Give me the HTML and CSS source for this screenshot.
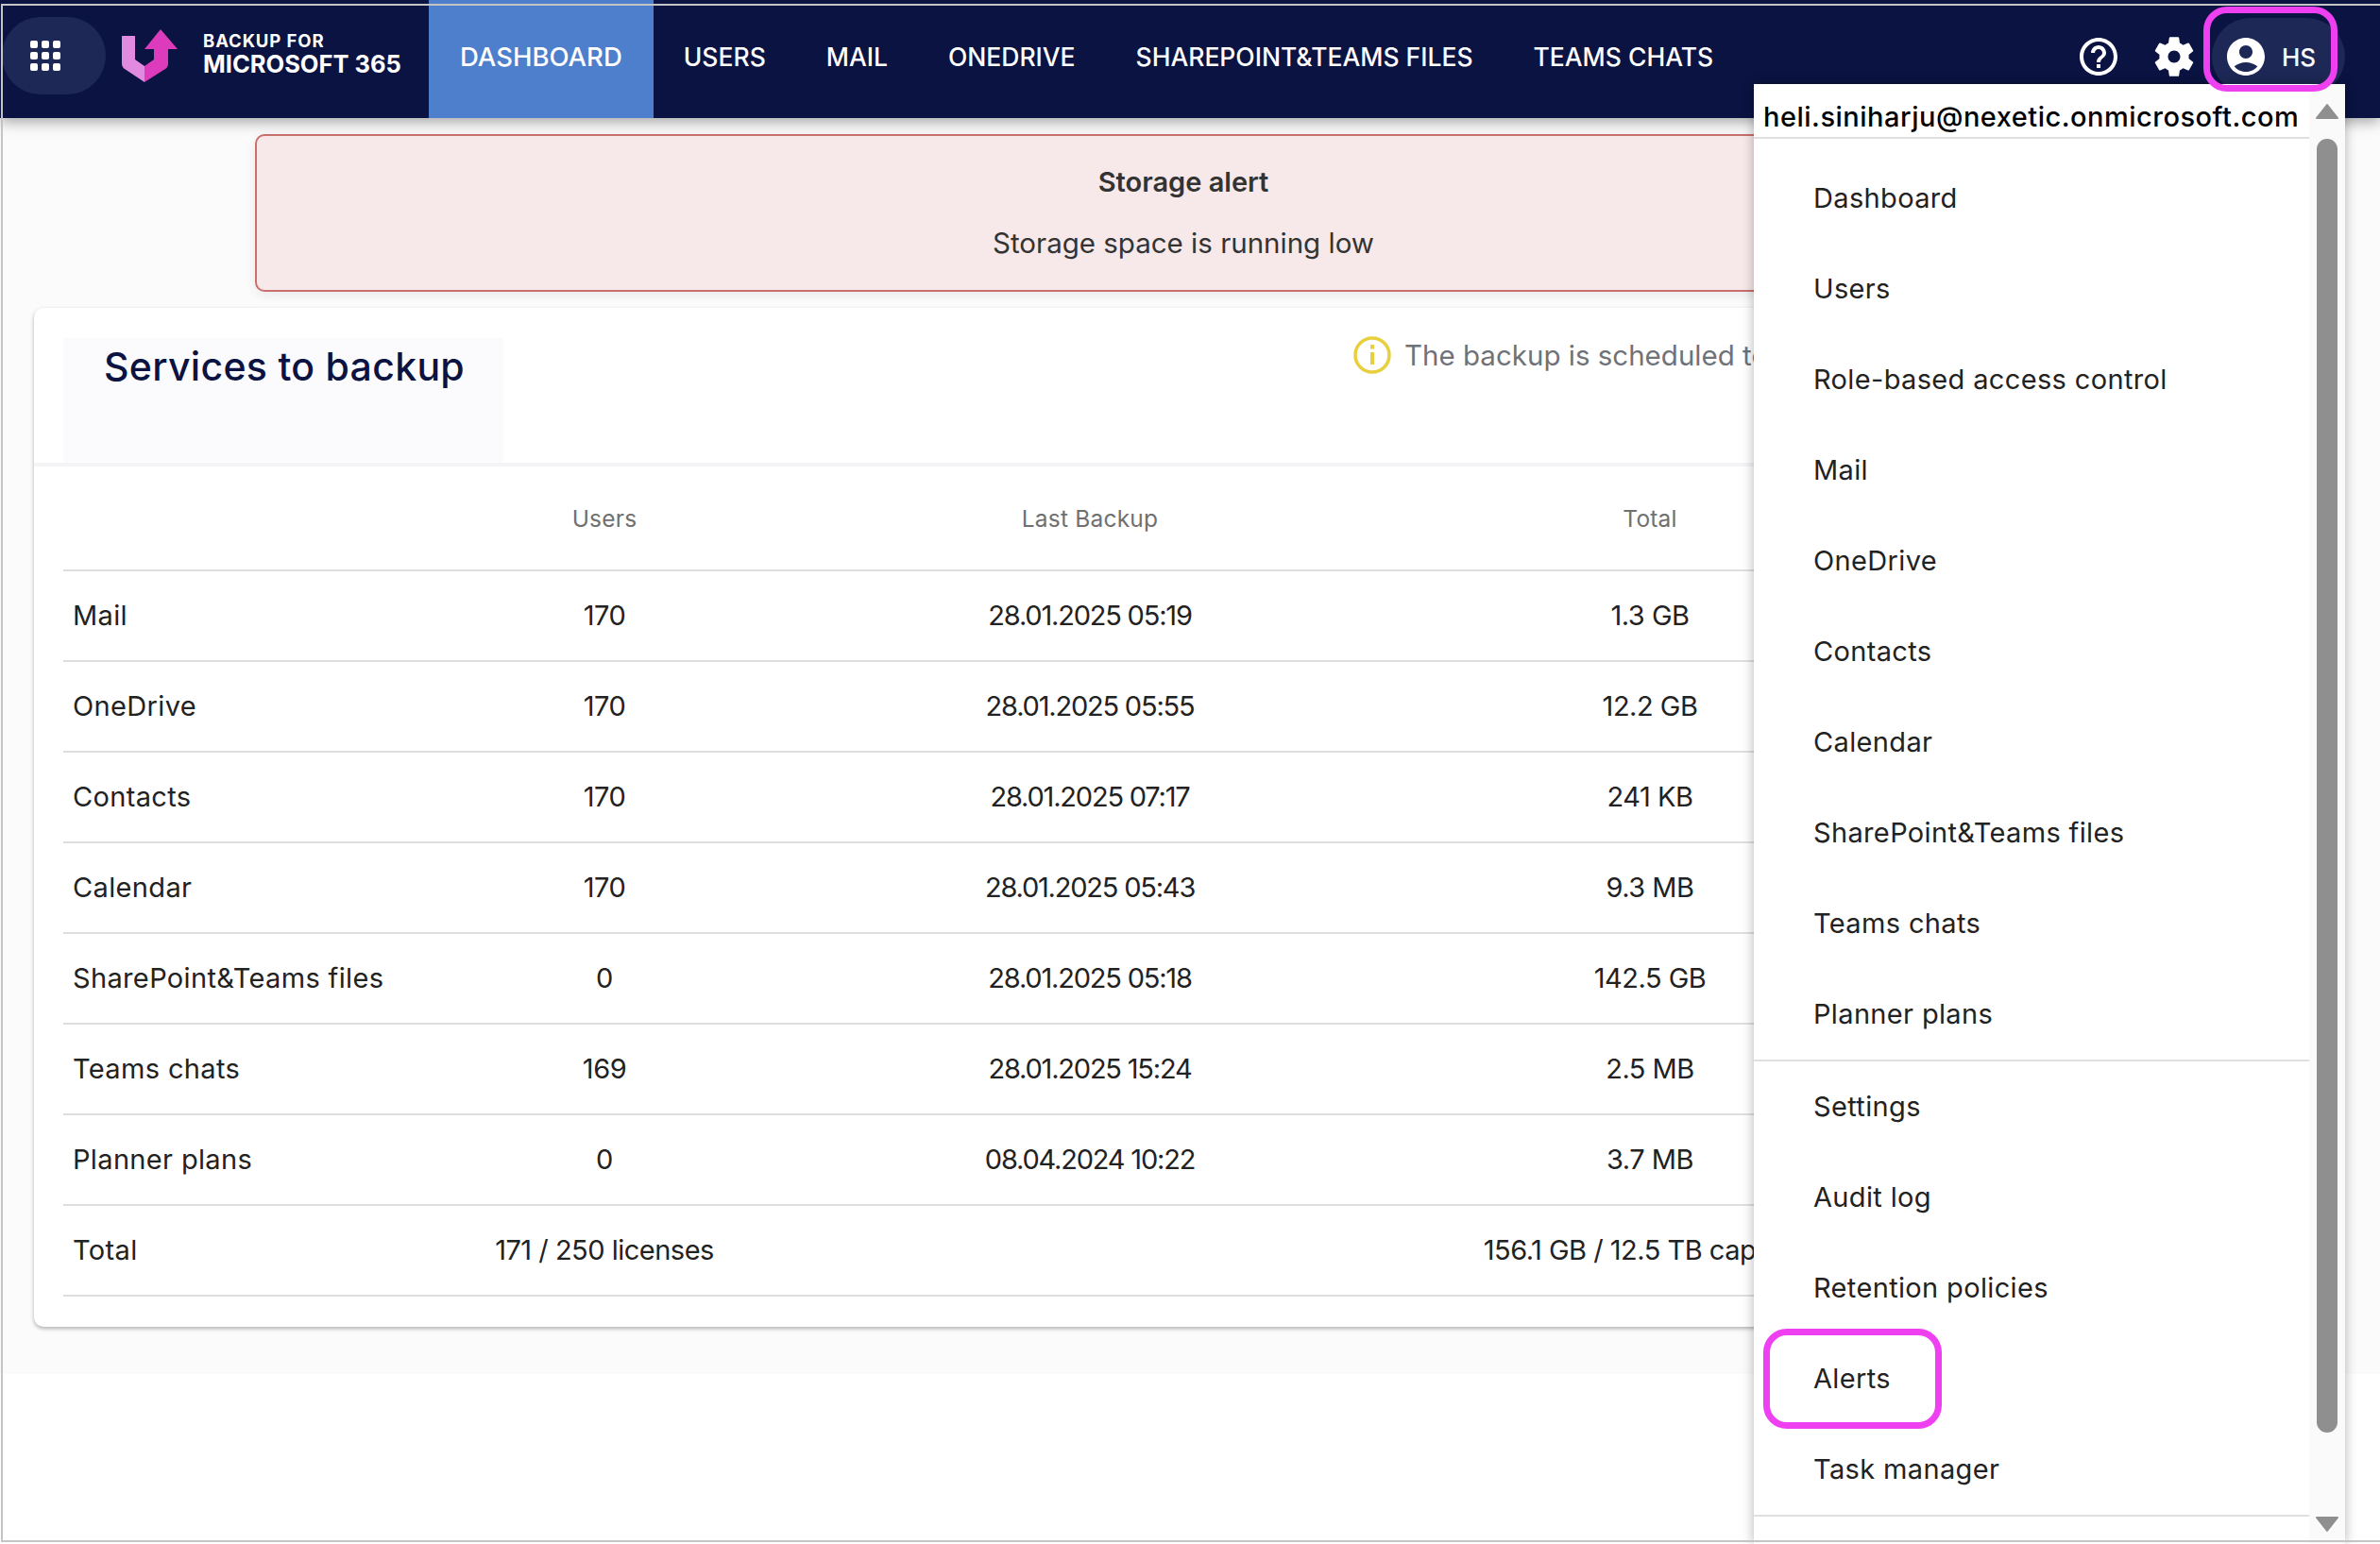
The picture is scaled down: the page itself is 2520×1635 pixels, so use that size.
FILE: index.html
```html
<!DOCTYPE html>
<html>
<head>
    <meta charset="utf-8">
    <title>Backup for Microsoft 365</title>
    <link rel="stylesheet" href="styles.css">
</head>

<body>
<header class="topbar">
    <button class="apps_btn">
        <span class="apps_grid">
            <i></i><i></i><i></i>
            <i></i><i></i><i></i>
            <i></i><i></i><i></i>
        </span>
    </button>
    <svg class="logo" viewBox="0 0 80 80" width="80" height="80">
        <path fill="#e08be0" d="M9 18H23V43L33 50V67L12 53Q9 51 9 47Z"/>
        <path fill="#dc3bbb" d="M33 50L43 43V32H33L50 11L68 32H58V47Q58 51 55 53L33 67Z"/>
    </svg>
    <div class="brand">
        <span class="brand_small">BACKUP FOR</span>
        <span class="brand_big">MICROSOFT 365</span>
    </div>
    <nav class="nav">
        <a class="nav_item active">DASHBOARD</a>
        <a class="nav_item">USERS</a>
        <a class="nav_item">MAIL</a>
        <a class="nav_item">ONEDRIVE</a>
        <a class="nav_item">SHAREPOINT&amp;TEAMS FILES</a>
        <a class="nav_item">TEAMS CHATS</a>
    </nav>
    <div class="top_icons">
        <svg class="top_icon" viewBox="0 0 24 24"><path d="M11 18h2v-2h-2v2zm1-16C6.48 2 2 6.48 2 12s4.48 10 10 10 10-4.48 10-10S17.52 2 12 2zm0 18c-4.41 0-8-3.59-8-8s3.59-8 8-8 8 3.59 8 8-3.59 8-8 8zm0-14c-2.21 0-4 1.79-4 4h2c0-1.1.9-2 2-2s2 .9 2 2c0 2-3 1.75-3 5h2c0-2.25 3-2.5 3-5 0-2.21-1.79-4-4-4z"/></svg>
        <svg class="top_icon gear_icon" viewBox="0 0 24 24"><path d="M19.14 12.94c.04-.3.06-.61.06-.94 0-.32-.02-.64-.07-.94l2.03-1.58c.18-.14.23-.41.12-.61l-1.92-3.32c-.12-.22-.37-.29-.59-.22l-2.39.96c-.5-.38-1.03-.7-1.62-.94l-.36-2.54c-.04-.24-.24-.41-.48-.41h-3.84c-.24 0-.43.17-.47.41l-.36 2.54c-.59.24-1.13.57-1.62.94l-2.39-.96c-.22-.08-.47 0-.59.22L2.74 8.87c-.12.21-.08.47.12.61l2.03 1.58c-.05.3-.09.63-.09.94s.02.64.07.94l-2.03 1.58c-.18.14-.23.41-.12.61l1.92 3.32c.12.22.37.29.59.22l2.39-.96c.5.38 1.03.7 1.62.94l.36 2.54c.05.24.24.41.48.41h3.84c.24 0 .44-.17.47-.41l.36-2.54c.59-.24 1.13-.56 1.62-.94l2.39.96c.22.08.47 0 .59-.22l1.92-3.32c.12-.22.07-.47-.12-.61l-2.01-1.58zM12 15c-1.65 0-3-1.35-3-3s1.35-3 3-3 3 1.35 3 3-1.35 3-3 3z"/></svg>
        <div class="user_pill">
            <svg class="top_icon" viewBox="0 0 24 24"><path d="M12 2C6.48 2 2 6.48 2 12s4.48 10 10 10 10-4.48 10-10S17.52 2 12 2zm0 4c1.93 0 3.5 1.57 3.5 3.5S13.93 13 12 13s-3.5-1.57-3.5-3.5S10.07 6 12 6zm0 14c-2.03 0-4.43-.82-6.14-2.88C7.55 15.8 9.68 15 12 15s4.45.8 6.14 2.12C16.43 19.18 14.03 20 12 20z"/></svg>
            <span>HS</span>
        </div>
    </div>
</header>

<main class="content">
    <div class="alert">
        <p class="alert_title">Storage alert</p>
        <p class="alert_text">Storage space is running low</p>
    </div>

    <section class="card">
        <div class="card_head">
            <h2 class="card_title">Services to backup</h2>
            <div class="schedule">
                <svg class="info_icon" viewBox="0 0 40 40" width="40" height="40">
                    <circle cx="20" cy="20" r="18" fill="none" stroke="#e8cf3e" stroke-width="3.5"/>
                    <rect x="18" y="9" width="4" height="4.5" fill="#e8cf3e"/>
                    <rect x="18" y="17" width="4" height="13" fill="#e8cf3e"/>
                </svg>
                <span>The backup is scheduled to</span>
            </div>
        </div>
        <table class="services">
            <colgroup>
                <col class="col_name">
                <col class="col_users">
                <col class="col_backup">
                <col class="col_total">
                <col>
            </colgroup>
            <thead>
                <tr><th></th><th>Users</th><th>Last Backup</th><th>Total</th><th></th></tr>
            </thead>
            <tbody>
                <tr><td>Mail</td><td>170</td><td>28.01.2025 05:19</td><td>1.3 GB</td><td></td></tr>
                <tr><td>OneDrive</td><td>170</td><td>28.01.2025 05:55</td><td>12.2 GB</td><td></td></tr>
                <tr><td>Contacts</td><td>170</td><td>28.01.2025 07:17</td><td>241 KB</td><td></td></tr>
                <tr><td>Calendar</td><td>170</td><td>28.01.2025 05:43</td><td>9.3 MB</td><td></td></tr>
                <tr><td>SharePoint&amp;Teams files</td><td>0</td><td>28.01.2025 05:18</td><td>142.5 GB</td><td></td></tr>
                <tr><td>Teams chats</td><td>169</td><td>28.01.2025 15:24</td><td>2.5 MB</td><td></td></tr>
                <tr><td>Planner plans</td><td>0</td><td>08.04.2024 10:22</td><td>3.7 MB</td><td></td></tr>
                <tr><td>Total</td><td>171 / 250 licenses</td><td></td><td>156.1 GB / 12.5 TB capacity</td><td></td></tr>
            </tbody>
        </table>
    </section>
</main>

<!-- user menu, open -->
<aside class="user_menu">
    <div class="menu_body">
        <div class="menu_email">heli.siniharju@nexetic.onmicrosoft.com</div>
        <ul class="menu_list">
            <li>Dashboard</li>
            <li>Users</li>
            <li>Role-based access control</li>
            <li>Mail</li>
            <li>OneDrive</li>
            <li>Contacts</li>
            <li>Calendar</li>
            <li>SharePoint&amp;Teams files</li>
            <li>Teams chats</li>
            <li>Planner plans</li>
        </ul>
        <ul class="menu_list">
            <li>Settings</li>
            <li>Audit log</li>
            <li>Retention policies</li>
            <li>Alerts</li>
            <li>Task manager</li>
        </ul>
    </div>
    <div class="menu_scroll">
        <svg class="scroll_arrow" viewBox="0 0 24 18" width="24" height="18"><path d="M12 2L23 16H1Z" fill="#8f8f8f" stroke="#8f8f8f" stroke-width="2" stroke-linejoin="round"/></svg>
        <div class="scroll_thumb"></div>
        <svg class="scroll_arrow scroll_down" viewBox="0 0 24 18" width="24" height="18"><path d="M1 2H23L12 16Z" fill="#8f8f8f" stroke="#8f8f8f" stroke-width="2" stroke-linejoin="round"/></svg>
    </div>
</aside>

<!-- annotation marks and screenshot frame lie over everything -->
<div class="mark mark_user"></div>
<div class="mark mark_alerts"></div>
<div class="frame"></div>
</body>
</html>
```

FILE: styles.css
```css
* {
    box-sizing: border-box;
}

body {
    position: relative;
    height: 1635px;
    margin: 0;
    overflow: hidden;
    background-color: #ffffff;
    font-family: "Inter", "Liberation Sans", sans-serif;
    color: #222222;
}

/* top bar */
.topbar {
    position: relative;
    z-index: 2;
    display: flex;
    align-items: center;
    height: 125px;
    background-color: #0a1342;
    box-shadow: 0 4px 14px rgba(0, 0, 0, 0.35);
    color: #ffffff;
}

.apps_btn {
    display: flex;
    align-items: center;
    width: 110px;
    height: 82px;
    margin: 0 0 7px 2px;
    padding: 0 0 0 30px;
    border: 0;
    border-radius: 41px;
    background-color: #1e2856;
}

.apps_grid {
    display: grid;
    grid-template-columns: repeat(3, 8px);
    grid-auto-rows: 8px;
    gap: 4px;
}

.apps_grid i {
    border-radius: 2px;
    background-color: #ffffff;
}

.logo {
    margin: 0 0 5px 8px;
}

.brand {
    display: flex;
    flex-direction: column;
    width: 239px;
    margin: 0 0 10px 15px;
    font-weight: 700;
}

.brand_small {
    font-size: 18.5px;
    line-height: 20px;
    letter-spacing: 0.9px;
}

.brand_big {
    font-size: 25.5px;
    line-height: 30px;
}

.nav {
    display: flex;
    align-self: stretch;
}

.nav_item {
    display: flex;
    align-items: center;
    padding: 0 32px 6px;
    font-size: 26.5px;
    font-weight: 500;
    white-space: nowrap;
}

.nav_item.active {
    padding: 0 33px 6px;
    font-size: 27.5px;
    background-color: #4d7fcc;
}

.top_icons {
    display: flex;
    align-items: center;
    margin: 0 37px 5px auto;
    gap: 30px;
}

.top_icon {
    width: 48px;
    height: 48px;
    fill: #ffffff;
}

.gear_icon {
    width: 52px;
    height: 52px;
}

.user_pill {
    display: flex;
    align-items: center;
    width: 141px;
    height: 82px;
    margin-left: -16px;
    padding-left: 12px;
    gap: 14px;
    border-radius: 41px;
    background-color: #1e2856;
    font-size: 26px;
    font-weight: 500;
}

/* page */
.content {
    height: 1330px;
    padding-top: 17px;
    background-color: #fbfbfb;
}

.alert {
    width: 1966px;
    height: 167px;
    margin-left: 270px;
    border: 2px solid #c9706e;
    border-radius: 10px;
    background-color: #f7e9e9;
    box-shadow: 0 3px 12px rgba(0, 0, 0, 0.08);
    text-align: center;
    color: #333333;
}

.alert p {
    margin: 0;
}

.alert_title {
    padding-top: 29px;
    font-size: 29px;
    font-weight: 600;
    line-height: 40px;
}

.alert_text {
    padding-top: 24px;
    font-size: 29.5px;
    line-height: 40px;
}

.card {
    width: 2434px;
    height: 1079px;
    margin: 17px 0 0 36px;
    border-radius: 10px;
    background-color: #ffffff;
    box-shadow: 0 2px 4px rgba(0, 0, 0, 0.3);
}

.card_head {
    display: flex;
    align-items: flex-start;
    height: 168px;
    padding-left: 31px;
    border-bottom: 4px solid #f4f4f6;
}

.card_title {
    width: 466px;
    height: 132px;
    margin: 32px 0 0;
    padding-left: 43px;
    background-color: #fbfbfe;
    font-size: 41px;
    font-weight: 500;
    letter-spacing: 0.3px;
    line-height: 60px;
    white-space: nowrap;
    color: #0a1342;
}

.schedule {
    display: flex;
    align-items: center;
    margin: 30px 0 0 900px;
    gap: 14px;
    font-size: 29.5px;
    white-space: nowrap;
    color: #6f7278;
}

.services {
    width: 2370px;
    margin-left: 31px;
    table-layout: fixed;
    border-collapse: collapse;
}

.col_name {
    width: 353px;
}

.col_users {
    width: 440px;
}

.col_backup {
    width: 588px;
}

.col_total {
    width: 598px;
}

.services th {
    height: 110px;
    padding-top: 1px;
    border-bottom: 2px solid #dfdfdf;
    font-size: 24.5px;
    font-weight: 400;
    letter-spacing: 0.2px;
    color: #707070;
}

.services td {
    height: 96px;
    padding-bottom: 3px;
    border-bottom: 2px solid #dfdfdf;
    font-size: 29px;
    letter-spacing: -0.5px;
    text-align: center;
    white-space: nowrap;
}

.services td:first-child {
    padding-left: 10px;
    letter-spacing: 0.35px;
    text-align: left;
}

.services td:nth-child(3) {
    letter-spacing: -1.2px;
}

/* user menu */
.user_menu {
    position: absolute;
    z-index: 3;
    top: 89px;
    left: 1857px;
    bottom: 0;
    display: flex;
    width: 626px;
    background-color: #ffffff;
    box-shadow: 0 0 12px rgba(0, 0, 0, 0.3);
}

.menu_body {
    width: 588px;
}

.menu_email {
    height: 58px;
    padding: 15px 0 0 10px;
    border-bottom: 2px solid #e0e0e0;
    font-size: 29px;
    font-weight: 500;
    letter-spacing: 0.5px;
    line-height: 40px;
    white-space: nowrap;
    color: #000000;
}

.menu_list {
    margin: 0;
    padding: 15px 0 0;
    list-style: none;
    border-bottom: 2px solid #e0e0e0;
}

.menu_list + .menu_list {
    padding-top: 0;
}

.menu_list li {
    height: 96px;
    padding-left: 63px;
    font-size: 29px;
    letter-spacing: 0.35px;
    line-height: 96px;
}

.menu_scroll {
    width: 38px;
    padding-top: 20px;
    background-color: #fafafa;
}

.scroll_arrow {
    display: block;
    margin-left: 7px;
}

.scroll_thumb {
    width: 22px;
    height: 1370px;
    margin: 20px 0 0 8px;
    border-radius: 11px;
    background-color: #8f8f8f;
}

.scroll_down {
    margin-top: 88px;
}

/* annotations */
.mark {
    position: absolute;
    z-index: 4;
    border: 7px solid #ee3ff0;
    border-radius: 25px;
}

.mark_user {
    top: 7px;
    left: 2333px;
    width: 142px;
    height: 90px;
}

.mark_alerts {
    top: 1407px;
    left: 1867px;
    width: 189px;
    height: 106px;
}

.frame {
    position: absolute;
    z-index: 5;
    top: 4px;
    left: 1px;
    right: 0;
    bottom: 2px;
    border: 2px solid #c4c4c4;
    border-right: 0;
}
```
